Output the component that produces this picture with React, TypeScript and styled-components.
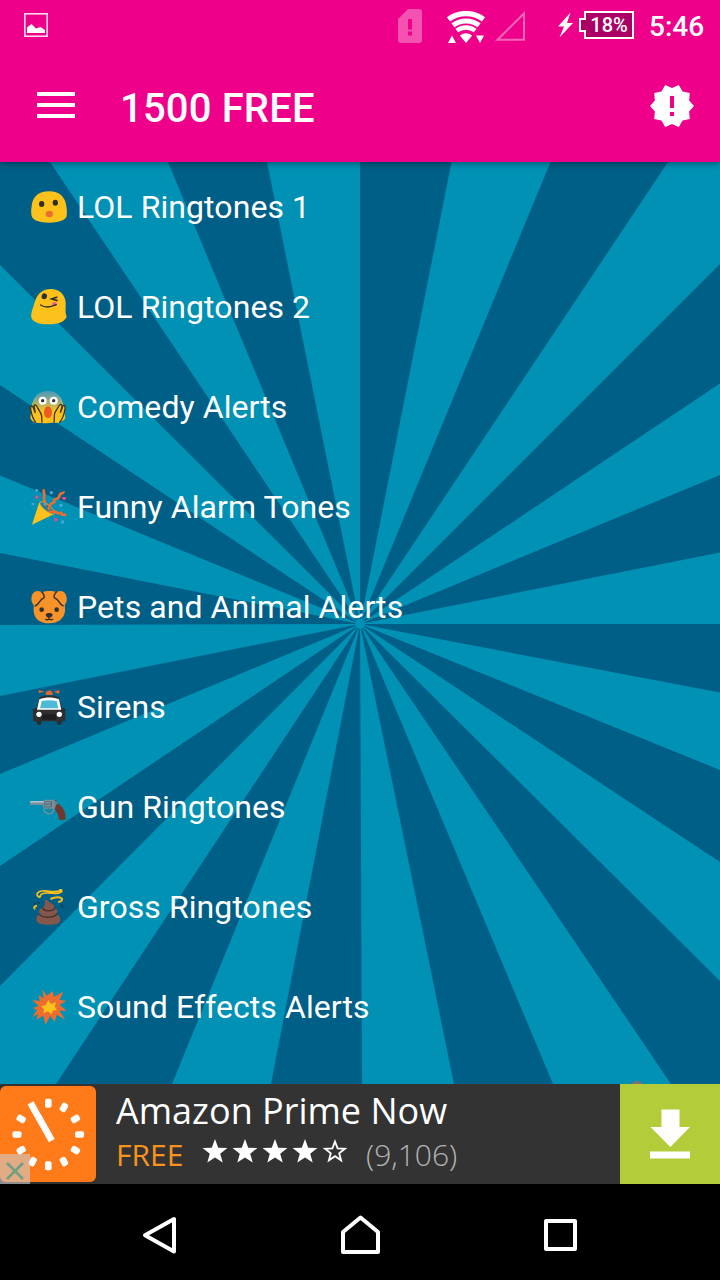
import React from "react";
import styled, { createGlobalStyle } from "styled-components";

const GlobalStyle = createGlobalStyle`
  * {
    box-sizing: border-box;
  }
  body {
    margin: 0;
    background: #000;
    font-family: Roboto, "Liberation Sans", sans-serif;
  }
  svg {
    display: block;
    flex: none;
  }
`;

const Screen = styled.div`
  width: 720px;
  height: 1280px;
  display: flex;
  flex-direction: column;
  overflow: hidden;
  color: #fff;
`;

const StatusBar = styled.div`
  height: 50px;
  flex: none;
  display: flex;
  align-items: center;
  padding: 0 16px 0 24px;
  background: #ef008b;
  z-index: 2;
`;

const StatusItem = styled.div<{ gap?: number; drop?: number }>`
  margin-left: ${({ gap }) => gap || 0}px;
  margin-top: ${({ drop }) => drop || 0}px;
`;

const Spacer = styled.div`
  flex: 1;
`;

const Battery = styled.div`
  display: flex;
  align-items: center;
  margin-left: 6px;
`;

const BatteryNub = styled.div`
  width: 7px;
  height: 14px;
  margin-right: -2px;
  border: 2px solid #fff;
  border-right: 0;
  background: #ab0064;
  z-index: 1;
`;

const BatteryBody = styled.div`
  width: 50px;
  height: 28px;
  border: 2px solid #fff;
  background: #ab0064;
  font-size: 20px;
  font-weight: 500;
  line-height: 25px;
  text-align: center;
`;

const Clock = styled.div`
  width: 55px;
  margin-left: 15px;
  padding-top: 4px;
  font-size: 28px;
  line-height: 32px;
  font-weight: 500;
  white-space: nowrap;
`;

const AppBar = styled.header`
  height: 112px;
  flex: none;
  display: flex;
  align-items: center;
  padding: 0 24px 0 37px;
  background: #ef008b;
  box-shadow: 0 1px 7px rgba(0, 0, 0, 0.45);
  z-index: 1;
`;

const MenuButton = styled.div`
  width: 38px;
  height: 26px;
  margin-top: -2px;
  display: flex;
  flex-direction: column;
  justify-content: space-between;
`;

const MenuLine = styled.span`
  height: 4px;
  background: #fff;
`;

const Title = styled.h1`
  flex: 1;
  margin: 0 0 0 45px;
  padding-top: 6px;
  font-size: 40px;
  line-height: 48px;
  font-weight: 500;
  letter-spacing: 0.15px;
`;

const Content = styled.main`
  position: relative;
  height: 922px;
  flex: none;
  overflow: hidden;
`;

const Backdrop = styled.svg`
  position: absolute;
  top: 0;
  left: 0;
`;

const List = styled.ul`
  position: relative;
  margin: 0;
  padding: 0;
  list-style: none;
`;

const Row = styled.li`
  height: 100px;
  display: flex;
  align-items: center;
  padding: 0 0 10px 28px;
  font-size: 32px;
  line-height: 40px;
  letter-spacing: 0.07px;
`;

const RowLabel = styled.span`
  margin-left: 9px;
  padding-bottom: 1px;
`;

const AdBanner = styled.div`
  height: 100px;
  flex: none;
  display: flex;
  background: #333;
  font-family: "Open Sans", "Noto Sans", sans-serif;
`;

const AdIcon = styled.div`
  position: relative;
  width: 96px;
  padding-top: 2px;
`;

const AdClose = styled.div`
  position: absolute;
  left: 0;
  bottom: 0;
  width: 30px;
  height: 30px;
  background: rgba(205, 205, 205, 0.6);
`;

const AdText = styled.div`
  flex: 1;
  padding-left: 20px;
`;

const AdTitle = styled.div`
  height: 53px;
  font-size: 36px;
  line-height: 54px;
  white-space: nowrap;
`;

const AdMeta = styled.div`
  height: 36px;
  display: flex;
  align-items: center;
  font-size: 30px;
  line-height: 36px;
`;

const Price = styled.span`
  width: 86px;
  color: #f7941d;
`;

const Stars = styled.span`
  display: flex;
  gap: 4px;
  margin-top: -8px;
`;

const Reviews = styled.span`
  margin-left: 18px;
  font-weight: 300;
  color: #b4b4b4;
`;

const Download = styled.div`
  width: 100px;
  display: flex;
  align-items: center;
  justify-content: center;
  background: #b2cc3a;
`;

const NavBar = styled.nav`
  height: 96px;
  flex: none;
  display: flex;
  justify-content: center;
  background: #000;
`;

const NavButton = styled.div`
  width: 200px;
  display: flex;
  justify-content: center;
  padding-top: 31px;
`;

// Each light ray is a pair of edge points around the 720x922 area, fanned from the centre
const rays = [
  "451.5,0 550.5,0",
  "668,0 720,0 720,102",
  "720,221.5 720,313",
  "720,390.5 720,462",
  "720,530.5 720,608",
  "720,700 720,819",
  "671,922 553,922",
  "454,922 362,922",
  "271,922 172,922",
  "56,922 0,922 0,824",
  "0,704 0,612",
  "0,534 0,463",
  "0,391 0,313.5",
  "0,223 0,103",
  "50,0 168,0",
  "267,0 360,0",
];

const Sunburst = () => (
  <Backdrop width="720" height="922">
    <rect width="720" height="922" fill="#005f87" />
    {rays.map((r) => (
      <polygon key={r} points={`360,462 ${r}`} fill="#0091b4" />
    ))}
    <circle cx="360" cy="462" r="5" fill="#0091b4" />
    <circle cx="637" cy="926" r="7" fill="#82706f" />
  </Backdrop>
);

const Emoji = ({ children }) => (
  <svg width="40" height="40" viewBox="0 0 120 120">
    {children}
  </svg>
);

const Surprised = () => (
  <Emoji>
    <path
      d="M63 13C31 13 13 31 11 57C9 70 9 77 11 87C15 101 37 107 63 107S112 101 116 87C117 77 117 70 115 57C112 31 95 13 63 13Z"
      fill="#fcc21b"
    />
    <ellipse cx="41" cy="51" rx="8" ry="9" fill="#2f2f2f" />
    <ellipse cx="82" cy="47" rx="8" ry="9" fill="#2f2f2f" />
    <ellipse cx="64" cy="81" rx="11" ry="10" fill="#ed6c30" />
  </Emoji>
);

const Winking = () => (
  <Emoji>
    <path
      d="M70 6C47 5 30 17 22 40C15 64 8 77 10 92C15 106 38 113 64 112C88 112 103 107 111 97C117 94 116 88 114 82C111 71 115 53 112 39C106 17 92 8 70 6Z"
      fill="#fcc21b"
    />
    <ellipse cx="49" cy="28" rx="8" ry="9" fill="#2f2f2f" transform="rotate(15 49 28)" />
    <path d="M88 30L71 36L89 41" fill="none" stroke="#2f2f2f" strokeWidth="5" />
    <path d="M72 53C72 44 80 43 86 48C87 55 79 60 72 53Z" fill="#ef5a9c" />
    <path d="M38 54C51 63 68 61 85 53" fill="none" stroke="#2f2f2f" strokeWidth="4" strokeLinecap="round" />
  </Emoji>
);

const Scream = () => (
  <Emoji>
    <defs>
      <linearGradient id="fear" x1="0" y1="0" x2="0" y2="1">
        <stop offset="0" stopColor="#4c9ab4" />
        <stop offset="0.2" stopColor="#76a5a0" />
        <stop offset="0.62" stopColor="#fcc21b" />
      </linearGradient>
    </defs>
    <path
      d="M59 12C31 12 14 31 11 60L7 93C10 101 16 106 26 107C44 109 72 109 88 106C101 105 109 100 112 93L107 60C104 30 87 12 59 12Z"
      fill="url(#fear)"
    />
    <circle cx="44" cy="41" r="12" fill="#fff" />
    <circle cx="77" cy="41" r="12" fill="#fff" />
    <circle cx="44" cy="41" r="5" fill="#2f2f2f" />
    <circle cx="77" cy="41" r="5" fill="#2f2f2f" />
    <ellipse cx="60" cy="76" rx="12" ry="18" fill="#ed5b23" />
    <path
      d="M8 68C6 57 13 52 16 62L22 77L18 56C19 50 25 52 28 60L37 76C43 85 41 96 42 107H23C14 99 11 84 8 68Z M111 66C113 53 104 51 103 62L97 77L102 58C101 49 95 51 91 60L81 76C77 85 80 96 78 107H94C105 99 108 84 111 66Z"
      fill="#fcc21b"
    />
    <path
      d="M8 68C6 57 13 53 16 62L22 78L18 57C19 51 24 52 28 61L37 76C43 85 41 96 42 107M8 68C11 84 15 97 24 107M111 66C113 53 104 52 103 62L97 77L102 58C101 49 95 51 91 60L81 76C77 85 80 96 78 107M111 66C108 84 104 97 94 107"
      fill="none"
      stroke="#3b3524"
      strokeWidth="4"
    />
  </Emoji>
);

const Party = () => (
  <Emoji>
    <path d="M34 45L12 113L77 82C61 75 46 62 34 45Z" fill="#fcc21b" />
    <path d="M35 48C41 38 55 48 67 59C78 69 84 78 77 82C67 84 36 61 35 48Z" fill="#1d809d" stroke="#f9b61b" strokeWidth="3" />
    <g fill="none" stroke="#ed6c30" strokeWidth="8">
      <path d="M50 56C57 47 45 40 48 31C53 23 44 17 48 7" />
      <path d="M63 69C61 58 69 49 79 45C75 30 94 40 94 27C95 16 108 22 107 13" />
      <path d="M63 72C69 80 78 69 86 76C91 85 99 70 102 83L115 84" />
    </g>
    <g fill="#48a9d5">
      <circle cx="26" cy="10" r="4" />
      <circle cx="14" cy="51" r="4" />
      <circle cx="70" cy="17" r="5" />
      <circle cx="99" cy="55" r="5" />
      <circle cx="104" cy="105" r="5" />
      <circle cx="50" cy="51" r="4" />
    </g>
    <g fill="#da5090">
      <rect x="22" y="26" width="9" height="9" transform="rotate(20 26 30)" />
      <rect x="103" y="30" width="11" height="8" />
      <rect x="79" y="93" width="9" height="10" transform="rotate(20 83 97)" />
    </g>
  </Emoji>
);

const Dog = () => (
  <Emoji>
    <path d="M36 17C53 10 76 10 92 17C107 26 112 50 111 72C109 94 91 109 64 109C35 109 18 94 17 71C16 47 21 25 36 17Z" fill="#f79329" />
    <path d="M39 14C28 10 17 12 12 25C8 39 11 49 20 57C33 57 33 38 48 33C51 29 47 20 39 14Z M87 14C98 10 110 12 114 24C119 38 116 49 107 57C94 57 94 38 80 33C76 29 80 20 87 14Z" fill="#f79329" />
    <path d="M40 14C46 18 51 28 47 33C34 36 33 56 20 57M87 14C80 18 76 28 80 33C94 36 94 56 107 57" fill="none" stroke="#3b342c" strokeWidth="4.5" />
    <circle cx="41" cy="68" r="7" fill="#2f2f2f" />
    <circle cx="86" cy="68" r="7" fill="#2f2f2f" />
    <path d="M53 83C54 76 73 76 74 83C72 90 67 92 63 92C59 92 55 90 53 83Z" fill="#2f2f2f" />
    <path d="M63 91V96M52 96C56 99 61 98 63 96C66 98 71 99 75 96" fill="none" stroke="#2f2f2f" strokeWidth="4" />
  </Emoji>
);

const PoliceCar = () => (
  <Emoji>
    <path d="M53 24V18C55 8 72 8 74 18V24Z M50 14L32 9V18Z M77 14L94 9V21Z" fill="#dc6832" />
    <path d="M26 100H40V108C40 115 26 115 26 108Z M87 100H101V108C101 115 87 115 87 108Z" fill="#2b2b2b" />
    <path d="M35 31C50 24 77 24 92 31L102 64C109 67 112 73 112 79V98C112 101 109 103 105 103H22C18 103 15 101 15 98V79C15 72 18 67 25 64Z" fill="#2f2f2f" />
    <path d="M34 37C52 30 76 30 93 37L100 68H27Z" fill="#fff" />
    <path d="M41 42C55 39 72 39 86 42L91 64H36Z" fill="#4fbad7" />
    <path d="M42 82H85V98H42Z" fill="#1f1f1f" />
    <circle cx="33" cy="82" r="8" fill="#fff" />
    <circle cx="94" cy="82" r="8" fill="#fff" />
    <path d="M15 71L25 66M112 71L102 66" stroke="#2b2b2b" strokeWidth="7" />
  </Emoji>
);

const Gun = () => (
  <Emoji>
    <path d="M6 42H47V38H81L87 46V61L76 65H49L43 54H6Z" fill="#78909c" />
    <path d="M7 42H47V47H7Z" fill="#b0bec5" />
    <path d="M47 65C50 84 75 87 78 65" fill="none" stroke="#78909c" strokeWidth="4" />
    <path d="M62 64C62 71 64 75 68 77" fill="none" stroke="#546e7a" strokeWidth="3" />
    <rect x="49" y="43" width="23" height="18" fill="#54717c" />
    <path d="M51 48H68M51 56H68" stroke="#8da3ad" strokeWidth="3" />
    <path d="M78 42L85 37L86 44Z" fill="#455a64" />
    <path d="M79 47L87 52L82 62L86 72" fill="none" stroke="#69838e" strokeWidth="6" />
    <path d="M86 51C96 50 104 61 109 72C113 80 112 88 113 98L94 99C91 92 92 84 86 76C81 71 80 65 82 60Z" fill="#70392f" />
  </Emoji>
);

const Poo = () => (
  <Emoji>
    <path d="M37 31C19 27 28 12 44 12C63 10 80 20 99 9M99 15C85 25 70 15 52 18C40 20 35 23 37 31" fill="none" stroke="#fcc21b" strokeWidth="5" />
    <circle cx="98" cy="12" r="6" fill="#fcc21b" />
    <path d="M67 36C79 31 93 29 102 35C103 42 96 46 90 44M27 56C17 57 16 63 22 66" fill="none" stroke="#f6ba1d" strokeWidth="6" />
    <path d="M49 39C55 53 46 56 45 63C32 65 30 73 36 81C22 86 24 99 28 106C35 116 90 116 96 104C99 94 94 84 85 82C92 71 87 65 79 62C82 49 62 49 58 39Z" fill="#85564b" />
    <path d="M44 63C50 75 76 74 81 62M34 81C43 95 81 93 88 80" fill="none" stroke="#40312d" strokeWidth="4" />
    <path d="M98 53L104 57L100 63M27 45L35 50M17 53L23 48M107 62L109 65" fill="none" stroke="#173f51" strokeWidth="4" />
  </Emoji>
);

const Explosion = () => (
  <Emoji>
    <path
      d="M43 7L57 26L74 12L78 29L106 14L95 38L115 42L95 54L116 71L94 71L112 98L86 83L80 105L67 87L52 113L46 86L23 99L32 81L13 90L27 69L14 63L31 57L13 39L36 42L31 24L47 34Z"
      fill="#ed6c30"
    />
    <path d="M61 38L69 51L84 46L80 60L87 69L75 71L70 82L60 73L46 79L48 66L39 58L53 55Z" fill="#fcc21b" />
  </Emoji>
);

const categories = [
  { name: "LOL Ringtones 1", icon: <Surprised /> },
  { name: "LOL Ringtones 2", icon: <Winking /> },
  { name: "Comedy Alerts", icon: <Scream /> },
  { name: "Funny Alarm Tones", icon: <Party /> },
  { name: "Pets and Animal Alerts", icon: <Dog /> },
  { name: "Sirens", icon: <PoliceCar /> },
  { name: "Gun Ringtones", icon: <Gun /> },
  { name: "Gross Ringtones", icon: <Poo /> },
  { name: "Sound Effects Alerts", icon: <Explosion /> },
];

const Star = ({ filled }) => (
  <svg width="26" height="26" viewBox="0 0 26 26">
    <path
      d={
        filled
          ? "M13 1L16.2 9.7L25.4 10L18.2 15.7L20.7 24.6L13 19.5L5.3 24.6L7.8 15.7L0.6 10L9.8 9.7Z"
          : "M13 3.6L15.6 10.4L22.9 10.8L17.2 15.3L19.1 22.3L13 18.2L6.9 22.3L8.8 15.3L3.1 10.8L10.4 10.4Z"
      }
      fill={filled ? "#fff" : "none"}
      stroke={filled ? "none" : "#fff"}
      strokeWidth="1.8"
    />
  </svg>
);

// Tick marks around the dial; the 11 o'clock one is covered by the hand
const dialTicks = [0, 30, 60, 90, 120, 150, 180, 210, 240, 270, 300];

const App = () => {
  return (
    <>
      <GlobalStyle />
      <Screen>
        <StatusBar>
          <svg width="24" height="24" viewBox="0 0 24 24">
            <rect x="0.8" y="0.8" width="22.4" height="22.4" fill="none" stroke="#fff" strokeOpacity="0.85" strokeWidth="1.6" />
            <path d="M3 20V14.5L7.5 11L12 15.5L16.5 14L21 17V20Z" fill="#fff" />
          </svg>
          <Spacer />
          <StatusItem drop={2}>
            <svg width="24" height="34" viewBox="0 0 24 34">
              <path
                d="M10 0H21Q24 0 24 3V31Q24 34 21 34H3Q0 34 0 31V10ZM10 10V20.5H14V10ZM10 22.5V26.5H14V22.5Z"
                fill="#fff"
                fillOpacity="0.32"
                fillRule="evenodd"
              />
            </svg>
          </StatusItem>
          <StatusItem gap={24} drop={4}>
            <svg width="40" height="32" viewBox="0 0 40 32">
              <g fill="none" stroke="#fff">
                <path d="M2.5 8.3A29.5 29.5 0 0 1 37.5 8.3" strokeWidth="5.4" />
                <path d="M6.9 14.3A22 22 0 0 1 33.1 14.3" strokeWidth="5" />
                <path d="M10.8 19.5A15.5 15.5 0 0 1 29.2 19.5" strokeWidth="4.6" />
              </g>
              <path d="M13.8 24.5A10.6 10.6 0 0 1 26.2 24.5L20 32Z M2 32L6 24.5L10 32Z M30 24.5H38L34 32Z" fill="#fff" />
            </svg>
          </StatusItem>
          <StatusItem gap={9} drop={3}>
            <svg width="31" height="31" viewBox="0 0 31 31">
              <path d="M2.5 28.8H29V2.5Z" fill="none" stroke="#fff" strokeOpacity="0.4" strokeWidth="2" />
            </svg>
          </StatusItem>
          <StatusItem gap={32}>
            <svg width="15" height="26" viewBox="0 0 15 26">
              <path d="M12.5 0.5L0 14.5H6L1.5 25.5L15 11H9Z" fill="#fff" />
            </svg>
          </StatusItem>
          <Battery>
            <BatteryNub />
            <BatteryBody>18%</BatteryBody>
          </Battery>
          <Clock>5:46</Clock>
        </StatusBar>
        <AppBar>
          <MenuButton>
            <MenuLine />
            <MenuLine />
            <MenuLine />
          </MenuButton>
          <Title>1500 FREE</Title>
          <svg width="48" height="48" viewBox="0 0 24 24" fill="#fff">
            <path d="M23 12l-2.44-2.78.34-3.68-3.61-.82-1.89-3.18L12 3 8.6 1.54 6.71 4.72l-3.61.81.34 3.68L1 12l2.44 2.78-.34 3.69 3.61.82 1.89 3.18L12 21l3.4 1.46 1.89-3.18 3.61-.82-.34-3.68L23 12zm-10 5h-2v-2h2v2zm0-4h-2V7h2v6z" />
          </svg>
        </AppBar>
        <Content>
          <Sunburst />
          <List>
            {categories.map(({ name, icon }) => (
              <Row key={name}>
                {icon}
                <RowLabel>{name}</RowLabel>
              </Row>
            ))}
          </List>
        </Content>
        <AdBanner>
          <AdIcon>
            <svg width="96" height="96" viewBox="0 0 96 96">
              <rect width="96" height="96" rx="6" fill="#ff7a18" />
              {dialTicks.map((angle) => (
                <rect
                  key={angle}
                  x="45"
                  y="12.7"
                  width="6.6"
                  height="9"
                  rx="2"
                  fill="#fff"
                  transform={`rotate(${angle} 48.3 48.5)`}
                />
              ))}
              <path d="M30.5 16.8L51.8 54.7" stroke="#fff" strokeWidth="6.8" />
            </svg>
            <AdClose>
              <svg width="30" height="30" viewBox="0 0 30 30">
                <path d="M7 9L23 25M23 9L7 25" stroke="#6f9f83" strokeWidth="2.5" />
              </svg>
            </AdClose>
          </AdIcon>
          <AdText>
            <AdTitle>Amazon Prime Now</AdTitle>
            <AdMeta>
              <Price>FREE</Price>
              <Stars>
                {[1, 2, 3, 4, 5].map((n) => (
                  <Star key={n} filled={n <= 4} />
                ))}
              </Stars>
              <Reviews>(9,106)</Reviews>
            </AdMeta>
          </AdText>
          <Download>
            <svg width="40" height="50" viewBox="0 0 40 50" fill="#fff">
              <path d="M11.5 0.5H29.5V18H40L20.3 38L0.5 18H11.5Z M0 42.5H40V49.5H0Z" />
            </svg>
          </Download>
        </AdBanner>
        <NavBar>
          <NavButton>
            <svg width="40" height="40" viewBox="0 0 40 40">
              <path d="M5 20.3L34 4V36.5Z" fill="none" stroke="#fff" strokeWidth="4" strokeLinejoin="round" />
            </svg>
          </NavButton>
          <NavButton>
            <svg width="40" height="40" viewBox="0 0 40 40">
              <path d="M20.5 2.5L38 17V37H3V17Z" fill="none" stroke="#fff" strokeWidth="4" strokeLinejoin="round" />
            </svg>
          </NavButton>
          <NavButton>
            <svg width="40" height="40" viewBox="0 0 40 40">
              <rect x="6" y="6" width="29" height="28" fill="none" stroke="#fff" strokeWidth="4" strokeLinejoin="round" />
            </svg>
          </NavButton>
        </NavBar>
      </Screen>
    </>
  );
};

export default App;
